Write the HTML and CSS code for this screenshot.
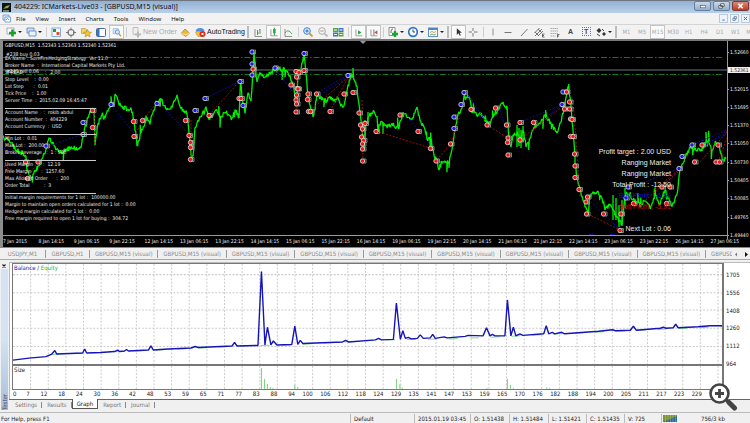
FILE: index.html
```html
<!DOCTYPE html>
<html lang="en">
<head>
<meta charset="utf-8">
<title>404229: ICMarkets-Live03 - [GBPUSD,M15 (visual)]</title>
<link rel="stylesheet" href="styles.css">
</head>
<body>
<header class="titlebar">
  <svg class="app-icon" viewBox="0 0 9 9"><rect width="9" height="9" fill="#111"/><path d="M1 6 4 3 8 2 6 5 3 5.500Z" fill="#7fae4a"/><path d="M1 8h6" stroke="#ddd"/></svg>
  <h1 class="title">404229: ICMarkets-Live03 - [GBPUSD,M15 (visual)]</h1>
  <div class="window-buttons">
    <button aria-label="Minimize"><svg viewBox="0 0 16 9"><rect x="5.500" y="4" width="6" height="2.500" fill="#fff" stroke="#555" stroke-width=".7"/></svg></button>
    <button aria-label="Restore"><svg viewBox="0 0 16 9"><path d="M7 2h4v3H7zM5 4h4v3H5z" fill="#fff" stroke="#444" stroke-width=".9"/></svg></button>
    <button class="close" aria-label="Close"><svg viewBox="0 0 16 9"><path d="m5.500 2 5 5m0-5-5 5" stroke="#fff" stroke-width="1.800"/></svg></button>
  </div>
</header>

<nav class="menubar">
  <svg class="doc-icon" viewBox="0 0 9 9"><path d="M1 1h6v5H1z" fill="#dbe9fa" stroke="#5d94d6" stroke-width=".8"/><path d="M3 3h5.500v5H3z" fill="#fff" stroke="#5d94d6" stroke-width=".8"/><path d="m4 6 1.500-1.500L7 6" stroke="#3c78c0" fill="none" stroke-width=".7"/></svg>
  <button>File</button><button>View</button><button>Insert</button><button>Charts</button><button>Tools</button><button>Window</button><button>Help</button>
  <div class="mdi-buttons">
    <button aria-label="Minimize chart"><svg viewBox="0 0 9 9"><path d="M3 6.500h3" stroke="#46618a" stroke-width="1.200"/></svg></button>
    <button aria-label="Restore chart"><svg viewBox="0 0 9 9"><path d="M4 2h3v3H4zM2.500 4h3v3h-3z" fill="#fff" stroke="#46618a" stroke-width=".8"/></svg></button>
    <button aria-label="Close chart"><svg viewBox="0 0 9 9"><path d="m2.500 2.500 4 4m0-4-4 4" stroke="#46618a" stroke-width="1.200"/></svg></button>
  </div>
</nav>

<div class="toolbar">
  <button class="drop" aria-label="New chart"><svg viewBox="0 0 14 14"><path d="M3 3h7v6H3z" fill="#fff" stroke="#8a9bb0" stroke-width=".8"/><path d="M8.500 4.500v7M5 8h7" stroke="#17a02a" stroke-width="2.600"/></svg></button>
  <button class="drop" aria-label="Profiles"><svg viewBox="0 0 14 14"><path d="M3 3h7v5H3z" fill="#cfe0f5" stroke="#5b82b5" stroke-width=".8"/><path d="M5 6h7v5H5z" fill="#e9f2fd" stroke="#5b82b5" stroke-width=".8"/></svg></button>
  <i class="sep"></i>
  <button aria-label="Market watch"><svg viewBox="0 0 14 14"><rect x="3" y="3" width="8.500" height="8.500" fill="#f4f8ff" stroke="#6f9bd1" stroke-width=".8"/><rect x="4" y="4" width="3" height="3" fill="#23a12f"/><rect x="7.500" y="7" width="3" height="3" fill="#e0512b"/></svg></button>
  <button aria-label="Data window"><svg viewBox="0 0 14 14"><circle cx="7" cy="7.500" r="3" fill="none" stroke="#777" stroke-width="1.200"/><path d="M7 2.500v3m0 4v3m-5-5h3m4 0h3" stroke="#777"/></svg></button>
  <button aria-label="Navigator"><svg viewBox="0 0 14 14"><path d="M2.500 3.500h4l1 1v4h-5z" fill="#f3d26b" stroke="#b98f1e" stroke-width=".6"/><path d="m8.500 4.500 1.200 2.500 2.800.3-2 1.900.6 2.700-2.600-1.400L6 12l.5-2.800-2-1.900 2.900-.3z" fill="#f2c335" stroke="#a97d12" stroke-width=".5"/></svg></button>
  <button aria-label="Terminal"><svg viewBox="0 0 14 14"><rect x="2.500" y="3.500" width="9" height="8" rx="1" fill="#fff" stroke="#49699a"/><rect x="3" y="4" width="2.500" height="7" fill="#3b74c4"/></svg></button>
  <button class="on" aria-label="Strategy tester"><svg viewBox="0 0 14 14"><path d="M3 3h6v6H3z" fill="#d9e8fa" stroke="#86abd6" stroke-width=".7"/><circle cx="8" cy="7" r="2.500" fill="#cde6ff" stroke="#5a86bf" stroke-width=".9"/><path d="m10 9 2 3" stroke="#c49b31" stroke-width="1.500"/></svg></button>
  <i class="sep"></i>
  <button class="wide" disabled><svg viewBox="0 0 14 14"><path d="M4 2.500h5v7H4z" fill="#eee" stroke="#b5b5b5" stroke-width=".8"/><path d="M9 6.500v6M6 9.500h6" stroke="#b9b9b9" stroke-width="2"/></svg><span>New Order</span></button>
  <button aria-label="MetaEditor"><svg viewBox="0 0 14 14"><path d="m3 8.500 4-4.500 4.500 4L8 11.500z" fill="#edb83d" stroke="#b07a12" stroke-width=".7"/><path d="m3 8.500 5 1.500 3.500-2" fill="none" stroke="#fff2b8" stroke-width=".8"/></svg></button>
  <button class="wide auto"><svg viewBox="0 0 14 14"><path d="M2.500 7.500 7 5l4.500 2.500L9 11.500H5z" fill="#f1c23c" stroke="#b48a1d" stroke-width=".5"/><path d="M2.500 6.500C3 2 11 2 11.500 6z" fill="#4f8fdb"/><circle cx="9.500" cy="9" r="3" fill="#e02c22"/><rect x="8.500" y="8" width="2" height="2" fill="#fff"/></svg><span>AutoTrading</span></button>
  <i class="grip"></i>
  <button aria-label="Bar chart"><svg viewBox="0 0 14 14"><path d="M4 4v7.500h7" fill="none" stroke="#777" stroke-width=".8"/><path d="M6.500 5v5M9 4v5M6.500 8H8M8 5h1" stroke="#3b9a3f" stroke-width=".9"/></svg></button>
  <button class="on" aria-label="Candlesticks"><svg viewBox="0 0 14 14"><path d="M4 4v7.500h8" fill="none" stroke="#777" stroke-width=".8"/><path d="M8 2v9" stroke="#16832a"/><rect x="6.500" y="3.500" width="3" height="5" fill="#1bb436"/></svg></button>
  <button aria-label="Line chart"><svg viewBox="0 0 14 14"><path d="M4 4v7.500h7" fill="none" stroke="#777" stroke-width=".8"/><path d="M4 8c2-3 4-3 7 1" fill="none" stroke="#3b9a3f" stroke-width=".9"/></svg></button>
  <i class="sep"></i>
  <button aria-label="Zoom in"><svg viewBox="0 0 14 14"><circle cx="6" cy="6" r="3.300" fill="#dff0ff" stroke="#3f7fca"/><path d="M6 4.300v3.400M4.300 6h3.400" stroke="#256ac0"/><path d="m8.500 8.500 3 3" stroke="#d1a02c" stroke-width="1.800"/></svg></button>
  <button aria-label="Zoom out"><svg viewBox="0 0 14 14"><circle cx="6" cy="6" r="3.300" fill="#f5f5f5" stroke="#aaa"/><path d="M4.300 6h3.400" stroke="#999"/><path d="m8.500 8.500 3 3" stroke="#bbb" stroke-width="1.800"/></svg></button>
  <button aria-label="Tile windows"><svg viewBox="0 0 14 14"><path d="M2 3h5v4H2zM7.500 7.500h5v4h-5z" fill="#50a838"/><path d="M7.500 3h5v4h-5zM2 7.500h5v4H2z" fill="#3d73c6"/><path d="M3 5h3m2.500 0h3M3 9.500h3m2.500 0h3" stroke="#fff"/></svg></button>
  <i class="sep"></i>
  <button class="on" aria-label="Auto scroll"><svg viewBox="0 0 14 14"><path d="M4 4v7.500h7.500" fill="none" stroke="#777" stroke-width=".8"/><path d="m6.500 5 4 2.500-4 2.500z" fill="#21a336"/></svg></button>
  <button class="on" aria-label="Chart shift"><svg viewBox="0 0 14 14"><path d="M4 4v7.500h7.500" fill="none" stroke="#777" stroke-width=".8"/><path d="M7.500 4v7" stroke="#2d6bb5"/><path d="m11.500 5-3.500 2.500 3.500 2.500z" fill="#d34f27"/></svg></button>
  <i class="sep"></i>
  <button class="drop" aria-label="Indicators"><svg viewBox="0 0 14 14"><path d="M3 2.500h6v8H3z" fill="#fff" stroke="#888" stroke-width=".9"/><path d="M5 8c0-4 1-4 2-4" stroke="#555" fill="none"/><path d="M9 6v6M6 9h6" stroke="#1ba42e" stroke-width="2.300"/></svg></button>
  <button class="drop" aria-label="Periods"><svg viewBox="0 0 14 14"><circle cx="7" cy="7" r="4.300" fill="#fff" stroke="#2d74c9" stroke-width="1.700"/><path d="M7 4.500V7h2" fill="none" stroke="#345"/></svg></button>
  <button class="drop" aria-label="Templates"><svg viewBox="0 0 14 14"><rect x="2.500" y="3" width="9" height="8.500" fill="#fff" stroke="#5f8fc9"/><path d="M2.500 4h9" stroke="#4d86cd" stroke-width="2"/><path d="m4 7.500 2-1 2 1 2-1" fill="none" stroke="#b2802c" stroke-width=".8"/><path d="m4 10 2-1 2 1 2-1" fill="none" stroke="#37a043" stroke-width=".8"/></svg></button>
  <i class="grip"></i>
  <button class="on" aria-label="Cursor"><svg viewBox="0 0 14 14"><path d="M5 2.500v8l2-2 1.500 3 1.200-.6-1.400-2.900H11z" fill="#333"/></svg></button>
  <button aria-label="Crosshair"><svg viewBox="0 0 14 14"><path d="M7 3v3m0 2v3.500M2.500 7H6m2 0h3.500" stroke="#777"/></svg></button>
  <i class="sep"></i>
  <div class="line-tools">
    <button aria-label="Vertical line"><svg viewBox="0 0 14 14"><path d="M7 3.500v7" stroke="#777" stroke-width=".8"/></svg></button>
    <button aria-label="Horizontal line"><svg viewBox="0 0 14 14"><path d="M3.500 7.500h7" stroke="#777"/></svg></button>
    <button aria-label="Trendline"><svg viewBox="0 0 14 14"><path d="m4 11 6.500-7" stroke="#777"/></svg></button>
    <button aria-label="Channel"><svg viewBox="0 0 14 14"><path d="m2.500 8 5-5M3 11l7-7M6 11l5-5M3 7l4 4M6 4l3 3" stroke="#666" stroke-width=".9"/><path d="M12.500 9h-2v3h2m-2-1.500h1.500" fill="none" stroke="#333" stroke-width=".7"/></svg></button>
    <button aria-label="Fibonacci"><svg viewBox="0 0 14 14"><path d="M2.500 3.500h8M2.500 6h8M2.500 8.500h8M2.500 11h5" stroke="#999" stroke-width=".8" stroke-dasharray="1.500 .5"/><path d="M9.500 12.500V9.500h2m-2 1.500H11" fill="none" stroke="#333" stroke-width=".7"/></svg></button>
    <button class="glyph" aria-label="Text">A</button>
    <button class="glyph boxed" aria-label="Text label">T</button>
    <button class="drop" aria-label="Arrows"><svg viewBox="0 0 14 14"><path d="m5 3 2.500 2.500L5 8 2.500 5.500zM10 7l2 2-2 2-2-2z" fill="#333"/><path d="m3 9 3 2M8 4l2 2" stroke="#444"/></svg></button>
  </div>
  <i class="grip"></i>
  <div class="periods">
    <button>M1</button><button>M5</button><button class="on">M15</button><button>M30</button><button>H1</button><button>H4</button><button>D1</button><button>W1</button>
  </div>
  <button class="period-last">MN</button>
</div>

<main class="chart-window">
  <div class="plot">
    <svg id="price" viewBox="3 41 724 194" preserveAspectRatio="none"></svg>
    <div class="symbol">GBPUSD,M15&nbsp; 1.52343 1.52363 1.52340 1.52361</div>
    <div class="order order-buy">#238 buy 0.03</div>
    <div class="order order-sell">#240 sell 0.06</div>
    <div class="comment">
      <p>EA Name : SureFireHedgingStrategy  Ver 11.0</p>
      <p>Broker Name  :  International Capital Markets Pty Ltd.</p>
      <p>SPREAD               :   2.00</p>
      <p>Stop Level    :  0.00</p>
      <p>Lot Step       :  0.01</p>
      <p>Tick Price    :  1.00</p>
      <p>Server Time  :  2015.02.09 16:45:47</p>
      <p class="rule"></p>
      <p>Account Name    :  rokib abdul</p>
      <p>Account Number  :  404229</p>
      <p>Account Currency  :  USD</p>
      <p class="rule"></p>
      <p>Min Lot :  0.01</p>
      <p>Max Lot :  200.00</p>
      <p>Broker Leverage   :  1 : 500</p>
      <p class="rule"></p>
      <p>Used Margin       :  12.19</p>
      <p>Free Margin       :  1257.60</p>
      <p>Max Allowed Order      :  200</p>
      <p>Order Total          :  3</p>
      <p class="rule"></p>
      <p>Initial margin requirements for 1 lot :  100000.00</p>
      <p>Margin to maintain open orders calculated for 1 lot :  0.00</p>
      <p>Hedged margin calculated for 1 lot :  0.00</p>
      <p>Free margin required to open 1 lot for buying :  304.72</p>
    </div>
    <div class="summary">
      <p>Profit target : 2.00 USD</p>
      <p>Ranging Market</p>
      <p>Ranging Market</p>
      <p>Total Profit : -12.50</p>
      <p class="buy">Buy Profit : -6.59</p>
      <p class="sell">Sell Profit : -5.91</p>
      <p>&nbsp;</p>
      <p>Next Lot : 0.06</p>
    </div>
  </div>
  <div class="scale">
    <span>1.52660</span><span></span><span>1.52015</span><span>1.51695</span><span>1.51370</span><span>1.51050</span><span>1.50730</span><span>1.50405</span><span>1.50085</span><span>1.49765</span><span>1.49440</span>
    <b class="last-price">1.52361</b>
  </div>
  <div class="time-axis">
    <span>7 Jan 2015</span><span>8 Jan 14:15</span><span>9 Jan 06:15</span><span>9 Jan 22:15</span><span>12 Jan 14:15</span><span>13 Jan 06:15</span><span>13 Jan 22:15</span><span>14 Jan 14:15</span><span>15 Jan 06:15</span><span>15 Jan 22:15</span><span>16 Jan 14:15</span><span>19 Jan 06:15</span><span>19 Jan 22:15</span><span>20 Jan 14:15</span><span>21 Jan 06:15</span><span>21 Jan 22:15</span><span>22 Jan 14:15</span><span>23 Jan 06:15</span><span>23 Jan 22:15</span><span>26 Jan 14:15</span><span>27 Jan 06:15</span>
  </div>
</main>

<nav class="chart-tabs">
  <button class="short">USDJPY,M1</button><button class="short">GBPUSD,H1</button>
  <div class="equal">
    <button>GBPUSD,M15 (visual)</button><button>GBPUSD,M15 (visual)</button><button>GBPUSD,M15 (visual)</button><button>GBPUSD,M15 (visual)</button><button>GBPUSD,M15 (visual)</button><button>GBPUSD,M15 (visual)</button><button>GBPUSD,M15 (visual)</button><button>GBPUSD,M15 (visual)</button><button>GBPUSD,M15 (visual)</button>
  </div>
  <button class="cut">GBPUSD,M15</button>
  <button class="scroll" aria-label="Previous tabs"><svg viewBox="0 0 9 9"><path d="M5 2.500v4l-2-2z" fill="#777"/></svg></button>
  <button class="scroll" aria-label="Next tabs"><svg viewBox="0 0 9 9"><path d="M4 2v5l3-2.500z" fill="#111"/></svg></button>
</nav>

<section class="tester">
  <aside class="tester-side">
    <button aria-label="Close tester"><svg viewBox="0 0 8 8"><path d="m2.500 2.500 3 3m0-3-3 3" stroke="#222" stroke-width="1.200"/></svg></button>
    <span class="tester-name">Tester</span>
  </aside>
  <div class="tester-main">
    <div class="graph">
      <div class="balance">
        <svg id="balance" viewBox="12 265 712 99" preserveAspectRatio="none"></svg>
        <div class="legend"><span class="l-balance">Balance</span> / <span class="l-equity">Equity</span></div>
      </div>
      <div class="balance-scale"><span>1705</span><span>1556</span><span>1408</span><span>1260</span><span>1112</span><span>964</span></div>
      <div class="size">
        <svg id="size" viewBox="12 366 712 23" preserveAspectRatio="none"></svg>
        <div class="legend">Size</div>
      </div>
      <div class="trade-axis" id="trades"></div>
    </div>
    <nav class="tester-tabs">
      <button>Settings</button><button>Results</button><button class="active">Graph</button><button>Report</button><button>Journal</button>
    </nav>
  </div>
  <button class="magnifier" aria-label="Enlarge">
    <svg viewBox="0 0 30 30"><path d="m17.500 17.500 3.500 3.500" stroke="#444" stroke-width="3"/><path d="m21 20.500 5.500 5.500" stroke="#444" stroke-width="5" stroke-linecap="round"/><circle cx="11.500" cy="11.500" r="9" fill="#fff" stroke="#444" stroke-width="2.600"/><path d="M11.500 7v9M7 11.500h9" stroke="#444" stroke-width="2.800"/></svg>
  </button>
</section>

<footer class="status">
  <span>For Help, press F1</span><span>Default</span><span>2015.01.19 03:45</span><span>O: 1.51438</span><span>H: 1.51484</span><span>L: 1.51421</span><span>C: 1.51435</span><span>V: 725</span>
  <span class="traffic"><svg viewBox="0 0 14 7"><rect width="14" height="7" fill="#7d9434"/><path d="M0 7 14 1v6z" fill="#2c6a96"/><path d="M2.500 0v7M5 0v7M7.500 0v7M10 0v7M12.500 0v7" stroke="#dfe7c8" stroke-width=".3"/></svg>756/3 kb</span>
</footer>
<script src="charts.js"></script>
</body>
</html>
```
FILE: styles.css
```css
* { box-sizing: border-box; }
html { height: 100%; }
body {
  margin: 0;
  min-height: 100%;
  display: flex;
  flex-direction: column;
  background: #f0f0f0;
  color: #222;
  font: 6px/8px "DejaVu Sans Condensed", "DejaVu Sans", sans-serif;
  overflow-x: hidden;
}
p, h1 { margin: 0; font-weight: normal; }
svg { display: block; }
button {
  margin: 0;
  padding: 0;
  border: 0;
  background: none;
  color: inherit;
  font: inherit;
  white-space: nowrap;
}

/* Window frame */
.titlebar {
  display: flex;
  height: 13px;
  padding-left: 2px;
  align-items: center;
  gap: 3px;
  border-top: 1px solid #6e7680;
  background: linear-gradient(#93b0d2, #b9d0ea);
}
.app-icon { width: 9px; height: 9px; }
.title { flex: 1; font: 7px/10px "Noto Sans", sans-serif; color: #111; }
.window-buttons { display: flex; gap: 2px; padding-right: 1px; align-self: flex-start; }
.window-buttons button {
  width: 17px;
  height: 10px;
  border: 1px solid #66809f;
  border-radius: 2px;
  background: linear-gradient(#c9d9ea, #93aecb);
}
.window-buttons .close { background: linear-gradient(#dd8a78, #bf3a22); border-color: #7c3a30; }
.window-buttons svg { width: 100%; height: 100%; }

.menubar {
  display: flex;
  height: 11px;
  padding-left: 2px;
  align-items: center;
  background: #f2f2f2;
  color: #111;
  font: 6px/10px "Noto Sans", sans-serif;
}
.doc-icon { width: 9px; height: 9px; }
.menubar > button { padding: 0 5px; }
.mdi-buttons { display: flex; gap: 2px; margin-left: auto; }
.mdi-buttons button { width: 9px; height: 9px; border: 1px solid #b9c9dc; background: #eef4fb; }
.mdi-buttons svg { width: 100%; height: 100%; }

/* Toolbar */
.toolbar {
  display: flex;
  height: 15px;
  padding-left: 4px;
  align-items: center;
  overflow: hidden;
  border-top: 1px solid #d4d4d4;
  background: #f2f2f2;
}
.toolbar button { flex: none; width: 15px; height: 14px; }
.toolbar svg { flex: none; width: 14px; height: 14px; }
.toolbar .drop { display: flex; width: 20px; align-items: center; }
.toolbar .drop::after {
  content: "";
  border: 2px solid transparent;
  border-top-color: #222;
  border-bottom: 0;
}
.toolbar .on { border: 1px solid #c4c4c4; background: #fafafa; }
.toolbar .on svg { width: 13px; height: 12px; }
.toolbar .wide {
  display: flex;
  width: 49px;
  align-items: center;
  color: #aaa;
  font: 7px/10px "Liberation Sans", sans-serif;
}
.toolbar .auto { width: 53px; color: #111; }
.sep { flex: none; width: 1px; height: 10px; margin: 0 2px; background: #cfcfcf; }
.grip { flex: none; width: 2px; height: 12px; margin: 0 2px 0 1px; border: 1px solid #bbb; border-width: 0 1px; }
.line-tools { display: flex; flex: none; width: 128px; justify-content: space-between; }
.toolbar .glyph { color: #444; font: bold 7px/14px "Liberation Sans", sans-serif; }
.toolbar .boxed { width: 9px; height: 9px; margin: 2px 3px; border: 1px dotted #777; line-height: 7px; }
.periods { display: flex; flex: none; width: 124px; justify-content: space-between; }
.periods button, .toolbar .period-last { color: #aaa; }

/* Price chart */
.chart-window {
  flex: 208 1 0;
  display: grid;
  grid-template-columns: minmax(0, 1fr) 23px;
  grid-template-rows: minmax(0, 1fr) 12px;
  border-top: 2px solid #777;
  border-left: 3px solid #8c8c8c;
  background: #000;
  color: #eee;
  font-size: 5px;
}
.plot { position: relative; min-height: 194px; overflow: hidden; }
.plot svg { position: absolute; inset: 0; width: 100%; height: 100%; }
.symbol, .order, .comment, .summary { position: absolute; }
.symbol, .order, .comment p { white-space: pre; }
.symbol { left: 2px; top: 0; }
.order-buy { left: 3px; top: 9px; }
.order-sell { left: 3px; top: 26px; }
.comment {
  left: 2px;
  top: 7%;
  bottom: 7%;
  display: flex;
  flex-direction: column;
  justify-content: space-between;
}
.comment p { height: 8px; margin: -1px 0 0; }
.comment .rule { width: 91px; height: 6px; border-bottom: 1px solid #ccc; }
.summary {
  right: 56px;
  bottom: 1px;
  text-align: right;
  font: 7px/11px "Liberation Sans", sans-serif;
}
.summary .buy { color: #1414d0; }
.summary .sell { color: #c01010; }

.scale {
  position: relative;
  display: flex;
  flex-direction: column;
  justify-content: space-between;
  border-left: 1px solid #999;
  padding: 7px 0 0;
  margin-bottom: -4px;
}
.scale span { display: flex; height: 8px; }
.scale span:not(:empty)::before { content: ""; width: 1px; height: 1px; margin: 4px 1px 0 0; background: #999; }
.last-price {
  position: absolute;
  left: 0;
  right: 0;
  top: 26px;
  height: 6px;
  padding-left: 2px;
  background: #eee;
  color: #333;
  font: 5px/6px "DejaVu Sans Condensed", sans-serif;
}
.time-axis {
  grid-column: 1 / -1;
  display: grid;
  grid-template-columns: repeat(21, 1fr);
  margin-right: 4px;
  background: linear-gradient(#999, #999) 0 0 / 724px 1px no-repeat;
  line-height: 10px;
}
.time-axis span { padding-top: 1px; white-space: nowrap; }

.chart-tabs {
  display: flex;
  height: 13px;
  align-items: center;
  overflow: hidden;
  border-top: 1px solid #888;
  border-bottom: 1px solid #aaa;
  color: #888;
}
.chart-tabs button { flex: none; height: 8px; border-right: 1px solid #999; }
.chart-tabs .short { width: 44px; }
.chart-tabs .short:first-child { width: 46px; }
.equal { display: flex; flex: 1; min-width: 0; }
.equal button { flex: 1 1 0; min-width: 0; }
.chart-tabs .cut { width: 26px; padding-left: 5px; overflow: hidden; text-align: left; border: 0; }
.chart-tabs .scroll { width: 9px; border: 0; }
.scroll svg { width: 9px; height: 9px; }

/* Strategy tester */
.tester { position: relative; flex: 152 1 0; display: flex; padding-top: 2px; }
.tester-side { display: flex; flex-direction: column; width: 9px; padding-bottom: 2px; }
.tester-side button { width: 8px; height: 7px; }
.tester-side svg { width: 8px; height: 8px; }
.tester-name {
  flex: 1;
  width: 7px;
  margin-left: 1px;
  writing-mode: vertical-rl;
  transform: rotate(180deg);
  line-height: 7px;
  color: #446;
  background: linear-gradient(#a9bed6, #d3e3f3 50%);
}
.tester-main { flex: 1; min-width: 0; display: flex; flex-direction: column; }
.graph {
  flex: 1;
  display: grid;
  grid-template-columns: minmax(0, 1fr) 26px;
  grid-template-rows: minmax(0, 103fr) minmax(0, 25fr) 9px;
  padding-left: 2px;
  border-top: 1px solid #bbb;
  border-left: 1px solid #bbb;
  background: #fff;
}
.balance, .size { position: relative; border: 1px solid #777; }
.balance { border-width: 1px 2px 1px 1px; }
.size { border-width: 1px 2px 1px 1px; }
.balance svg, .size svg { position: absolute; inset: 0; width: 100%; height: 100%; }
.legend { position: absolute; left: 1px; top: 0; }
.l-balance { color: #1616c8; }
.l-equity { color: #18b828; }
.balance-scale {
  display: flex;
  flex-direction: column;
  justify-content: space-between;
  padding: 8px 0 0 2px;
  margin-bottom: -3px;
}
.size { grid-column: 1; }
.trade-axis {
  grid-column: 1;
  display: grid;
  grid-template-columns: repeat(39, 1fr);
  padding-right: 22px;
  text-align: right;
}
.trade-axis span:first-child { display: flex; justify-content: space-between; padding-left: 1px; }
.tester-tabs { display: flex; height: 13px; padding-left: 1px; border-top: 1px solid #666; color: #777; }
.tester-tabs button { position: relative; height: 10px; padding: 0 5px; }
.tester-tabs button:not(.active)::after {
  content: "";
  position: absolute;
  right: 0;
  top: 2px;
  height: 6px;
  border-right: 1px solid #888;
}
.tester-tabs .active {
  margin-top: -1px;
  padding: 0 4px;
  border: 1px solid #555;
  border-top: 0;
  background: #fff;
  color: #111;
}
.magnifier { position: absolute; right: 12px; bottom: 0; width: 30px; height: 30px; }

.status {
  display: grid;
  height: 11px;
  grid-template-columns: 1fr 64px 56px 39px 39px 38px 38px 37px 89px;
  align-items: center;
  border-top: 1px solid #bbb;
  line-height: 9px;
}
.status span { padding-left: 3px; border-left: 1px solid #bbb; white-space: nowrap; }
.status span:first-child { padding-left: 1px; border: 0; }
.status .traffic { display: flex; gap: 24px; align-items: center; padding-left: 1px; }
.traffic svg { width: 14px; height: 7px; }
```
FILE: charts.js
```js
const NS = "http://www.w3.org/2000/svg";

function add(parent, tag, attrs) {
  const node = document.createElementNS(NS, tag);
  for (const key in attrs) node.setAttribute(key, attrs[key]);
  parent.appendChild(node);
  return node;
}

/* Repeatable noise for the intrabar movement */
let seed = 11;
function rnd() {
  seed = (seed * 16807) % 2147483647;
  return seed / 2147483647;
}

function pairs(text) {
  return text.trim().split(/\s+/).map(p => p.split(",").map(Number));
}

function dashes(svg, text, stroke) {
  text.trim().split(/\s+/).forEach(s => {
    const [x1, y1, x2, y2] = s.split(",");
    add(svg, "line", { x1, y1, x2, y2, stroke, "stroke-width": 0.9, "stroke-dasharray": "2 1.5" });
  });
}

const price = document.getElementById("price");
[57.5, 74.5].forEach(y => add(price, "line", {
  x1: 3, x2: 724, y1: y, y2: y, stroke: "#16781c", "stroke-dasharray": "6 2 1.5 2"
}));
add(price, "line", { x1: 3, x2: 727, y1: 70, y2: 70, stroke: "#353a42", "stroke-width": 2 });
add(price, "path", { d: "M360 41h6l-3 3z", fill: "#8c9bb0" });

const path = pairs(`3,138 8,140 14,147 20,152 26,155 27,172 31,177 35,170 40,165 45,152 49,138 55,147
 60,153 66,149 72,148 80,149 83,137 86,124 90,112 94,108 95,144 98,125 102,113 104,118 108,110 111,104
 113,106 115,95 120,105 126,109 131,108 134,120 137,145 141,133 144,125 146,118 150,122 156,103 160,98
 165,107 170,110 177,97 181,108 187,114 189,132 191,155 193,158 195,127 200,116 204,112 206,107 209,118
 213,116 216,108 220,118 226,112 232,119 235,110 239,118 240.5,80 242,98 245,113 248,93 251,100 252,88
 254,52 257,84 260,72 265,78 270,73 277,68 285,70 290,76 293,83 296,106 298,78 301,68 304,55 306,75
 308,95 310,106 313,116 315,108 317,95 321,98 326,101 330,97 334,102 338,98 343,108 346,96 350,78
 353,76 357,87 359,105 361,120 364,150 366,125 370,115 374,110 377,118 378,130 381,122 385,126 392,125
 399,127 403,113 408,118 412,119 417,107 420,120 424,128 427,138 430,140 434,155 437,163 439,168
 442,162 449,162 452,148 455,130 458,115 461,110 464,98 469,96 472,112 478,116 482,114 488,124 491,122
 494,115 499,108 503,104 507,108 509,140 511,148 513,135 518,133 520,138 523,130 526,146 530,140
 533,130 537,125 540,122 545,115 550,122 557,133 562,118 566,98 568,88 570,95 572,120 575,155 577,180
 580,190 585,205 588,214 590,195 596,192 601,195 605,208 610,205 614,213 618,220 622,224 625,195
 628,192 633,200 640,205 646,200 651,208 655,195 660,203 665,190 668,198 672,205 677,195 680,170
 685,158 690,148 696,150 702,150 708,140 712,150 716,142 720,150 723,160 727,158`);
let d = "";
for (let i = 0; i < path.length - 1; i++) {
  const [x1, y1] = path[i], [x2, y2] = path[i + 1];
  const steps = Math.max(1, Math.round((x2 - x1) / 0.7));
  for (let k = 0; k < steps; k++) {
    const t = k / steps;
    const x = x1 + (x2 - x1) * t;
    const y = y1 + (y2 - y1) * t + (rnd() - 0.5) * 5;
    d += (d ? "L" : "M") + x.toFixed(1) + " " + y.toFixed(1);
    if (rnd() > 0.93) d += "v" + ((rnd() - 0.5) * 20).toFixed(1);
  }
}
add(price, "path", { d, fill: "none", stroke: "#00f000", "stroke-width": 1.3, "stroke-linejoin": "bevel" });
add(price, "path", {
  d: "M517 125v22M519 128v18M521 130v18M523 126v16M613 195v25M616 198v22M619 205v22M622 200v26M625 188v20M365 120v15M368 112v12M383 122v12",
  stroke: "#00f000", "stroke-width": 1.3
});

dashes(price, `49,146,83,134 111,105,134,133 160,104,189,134 206,98,240,81 4,148,26,162 275,68,296,96
 315,94,348,75 320,95,348,77 410,120,430,145 466,93,485,120 520,122,562,105 546,118,563,104 500,110,508,138
 586,197,620,230 640,184,680,168 692,145,727,130 696,148,727,134 660,190,680,168 706,145,727,131`, "#1010b4");
dashes(price, `4,166,27,178 27,178,38,162 134,136,143,120 209,115,240,81 310,111,348,77 330,111,348,78
 376,131,430,148 437,160,451,143 451,143,460,116 487,125,508,138 520,140,563,106 588,214,620,230
 362,100,363,160 297,72,297,112 573,100,580,196 191,120,191,158 655,190,678,170 700,162,727,132 640,205,678,172
 718,162,727,138 142,121,156,104 94,110,95,145`, "#ad1010");

function marker([x, y], color) {
  add(price, "path", { d: `M${x + 1} ${y - 2}h2.5v4h-2.500`, fill: "none", stroke: "#7d997d", "stroke-width": 0.9 });
  add(price, "circle", { cx: x, cy: y, r: 2.2, fill: color, stroke: "#e4e4e4", "stroke-width": 0.8 });
}
pairs(`46,146 83,134.500 83,122.500 111,104.500 157,103.500 195,110.500 205,98.500 240,81.500 243,105.500
 252,52 252,64 252,75 275,68 304,53.500 348,75.500 454,128.500 454,117 461,104.500 464,92.500 562,104.500
 563,92 626,198 628,187 679,168.500 682,156.500 692,145`).forEach(p => marker(p, "#1919f0"));
pairs(`25.500,162 38,162 27.500,178.500 92.500,110.500 92.500,127.500 133.500,121.500 134,136.500
 142.500,120.500 185.500,120.500 189,135.500 190.500,142.500 190.500,147.500 190.500,159.500 209,115.500
 239,98.500 241,98.500 253,69 291,85 296,71.500 299,72.500 296.500,77 297,88.500 298,89 296.500,95 296,100
 296.500,104 296,112 304,70.500 308,94 307.500,99.500 308.500,111.500 310.500,111.500 316.500,94 330,111.500
 344,94 353,92.500 359,113 360.500,125 365,123.500 362.500,129 361.500,137 363.500,140.500 362.500,144
 362.500,149 362.500,161 376,131.500 400,115 418,131.500 430.500,148.500 436,161 450.500,144 471,109.500
 487,125 495.500,108 506.500,125 508,138 507.500,142.500 508,155 520,122.500 520,140 533.500,122.500
 566.500,92 564.500,109 569.500,102 569.500,109 570.500,119 572,119.500 570.500,136.500 573,136.500
 574.500,154 575,166 575,177.500 579,189.500 587.500,197 586,202 586.500,214 603.500,214 621,214
 620,230.500 633.500,203.500 662,187 670,187 666.500,203.500 694.500,162 702,145 718,145 716,162
 719.500,162`).forEach(p => marker(p, "#f01414"));
add(price, "path", { d: "M589 235h5M610 235h5", stroke: "#1212d0", "stroke-width": 1.500 });

/* Tester balance graph */
const balance = document.getElementById("balance");
const sizePane = document.getElementById("size");
for (let i = 1; i <= 40; i++) {
  const x = 12 + i * 17.7;
  add(balance, "line", { x1: x, x2: x, y1: 265, y2: 364, stroke: "#ccc", "stroke-dasharray": "2 1.5" });
  add(sizePane, "line", { x1: x, x2: x, y1: 366, y2: 389, stroke: "#ccc", "stroke-dasharray": "2 1.5" });
}
[275.5, 293.5, 310.5, 328.5, 346.5].forEach(y => add(balance, "line", {
  x1: 12, x2: 724, y1: y, y2: y, stroke: "#ccc", "stroke-dasharray": "2 1.5"
}));
add(balance, "polyline", {
  points: "51,354.500 58,354 120,351.500 200,348 240,346 300,344.500 380,340 450,339 510,336.500 560,334 640,330.500 724,327",
  fill: "none", stroke: "#7fe07f", "stroke-width": 1, "stroke-dasharray": "9 12"
});
add(balance, "polyline", {
  points: `12,360 28,358 45,356.500 51,354 54,350.500 56,354 82,353 84,349 86,353 100,352.500 114,351.500
   117,350 119,351.500 124,351 126,349.500 128,351 148,350 150.500,346 153,350 168,349 191,348 195,346.500
   198,347.500 232,346 234.500,342.500 237,346 258,345.500 261.500,272.500 265,345 267.500,327.500 271,345
   273.500,341 277,345 292,344.500 295,326.500 298,344.500 300.500,340.500 303,343.500 343,342 346,340.500
   349,342 376,340 379,338.500 382,340 394,339.500 397,303.500 401,339.500 403.500,331 406,338.500 409,337.500
   412,339 418,338.500 421,335 424,338.500 431,338 433.500,334.500 436,338.500 445,337 448,338 466,336.500
   469,335.500 484,336 487.500,328 491,336 493.500,334.500 496,336 506,336 508.500,300.500 512,336
   514.500,327.500 517,336 521,334 524,335.500 545,334 547.500,326 550,334 553.500,332.500 556,334
   563,332.500 566,334 600,331.500 614,330 617,331 632,330.500 635,326.500 638,330.500 662,328.500
   665,327.500 668,328.500 675,328 677.500,324.500 680,328 700,327 712,326 724,326`,
  fill: "none", stroke: "#1414b8", "stroke-width": 1.4, "stroke-linejoin": "bevel"
});
pairs(`261.500,368 264.500,379 267.500,384 270.500,387 273,388 295,385 298,387 397,379 400.500,384.500
 403,388 488,388 508.500,379 511.500,385 514.500,388 548,387.500 551,388`).forEach(([x, y]) =>
  add(sizePane, "line", { x1: x, x2: x, y1: y, y2: 389, stroke: "#6fd66f" }));

const trades = document.getElementById("trades");
const numbers = [0, 7, 12, 18, 24, 30, 36, 42, 48, 53, 59, 65, 71, 77, 83, 88, 94, 100, 106, 112, 118, 124, 129,
  135, 141, 147, 153, 159, 165, 170, 176, 182, 188, 194, 200, 205, 211, 217, 223, 229];
const cells = numbers.slice(1).map(n => {
  const cell = document.createElement("span");
  cell.textContent = n;
  trades.appendChild(cell);
  return cell;
});
cells[0].innerHTML = `<i class="origin">${numbers[0]}</i><i class="origin">${numbers[1]}</i>`;
cells[0].querySelectorAll("i").forEach(i => { i.style.fontStyle = "normal"; });
```
